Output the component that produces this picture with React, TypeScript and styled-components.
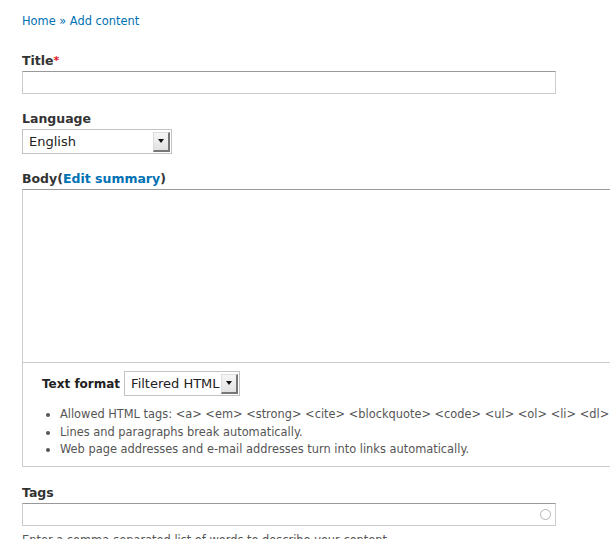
import React from "react";
import styled, { createGlobalStyle } from "styled-components";

const Global = createGlobalStyle`
  html, body { margin: 0; padding: 0; background: #fff; }
  body { font-family: "DejaVu Sans", Verdana, sans-serif; color: #3b3b3b; overflow: hidden; }
`;

const Page = styled.div`
  width: 610px;
  height: 539px;
  overflow: hidden;
  padding: 13px 0 0 22px;
  box-sizing: border-box;
`;

const Breadcrumb = styled.div`
  font-size: 11.4px;
  line-height: 16px;
  color: #0071b3;
  margin-bottom: 23px;
`;

const Link = styled.a`
  color: #0071b3;
  text-decoration: none;
`;

const Field = styled.div<{ $gap?: number }>`
  margin-bottom: ${(p) => p.$gap ?? 17}px;
`;

const Label = styled.label`
  display: block;
  font-size: 12.5px;
  font-weight: bold;
  line-height: 17px;
  color: #333;
  margin-bottom: 2px;
`;

const Required = styled.span`
  color: #e0161c;
  font-size: 11px;
  vertical-align: top;
`;

const TextInput = styled.div<{ $w: number }>`
  position: relative;
  width: ${(p) => p.$w}px;
  height: 23px;
  box-sizing: border-box;
  border: 1px solid #ccc;
  border-top-color: #999;
  background: #fff;
`;

const Throbber = styled.span`
  position: absolute;
  right: 4px;
  top: 5px;
  width: 11px;
  height: 11px;
  border: 1.5px solid #b5b5b5;
  border-radius: 50%;
  box-sizing: border-box;
`;

const Select = styled.div<{ $w: number }>`
  display: flex;
  align-items: center;
  justify-content: space-between;
  width: ${(p) => p.$w}px;
  height: 25px;
  box-sizing: border-box;
  border: 1px solid #c3c3c3;
  padding: 0 1px 0 6px;
  font-size: 13px;
  color: #222;
  background: #fff;
`;

const Arrow = styled.span`
  display: flex;
  align-items: center;
  justify-content: center;
  width: 14px;
  height: 17px;
  background: linear-gradient(#f6f6f6, #e2e2e2);
  border-right: 2px solid #777;
  border-bottom: 2px solid #777;
  border-top: 1px solid #ddd;
  border-left: 1px solid #ddd;
  &::after {
    content: "";
    border-left: 3px solid transparent;
    border-right: 3px solid transparent;
    border-top: 4px solid #111;
  }
`;

const BodyBox = styled.div`
  width: 600px;
  border: 1px solid #ccc;
  border-right: none;
  border-top-color: #999;
`;

const TextArea = styled.div`
  height: 172px;
  border-bottom: 1px solid #ccc;
`;

const FilterWrap = styled.div`
  padding: 8px 0 7px 19px;
`;

const FormatRow = styled.div`
  display: flex;
  align-items: center;
  gap: 4px;
`;

const InlineLabel = styled.span`
  font-size: 12px;
  font-weight: bold;
  color: #222;
`;

const Tips = styled.ul`
  margin: 10px 0 0;
  padding: 0 0 0 18px;
  font-size: 11.4px;
  line-height: 17.5px;
  color: #555;
  white-space: nowrap;
`;

const Description = styled.div`
  font-size: 11.4px;
  color: #555;
  margin-top: 7px;
  white-space: nowrap;
`;

export default function App() {
  return (
    <>
      <Global />
      <Page>
        <Breadcrumb>
          <Link href="#">Home</Link> » <Link href="#">Add content</Link>
        </Breadcrumb>

        <Field $gap={16}>
          <Label>
            Title<Required>*</Required>
          </Label>
          <TextInput $w={534} />
        </Field>

        <Field $gap={16}>
          <Label>Language</Label>
          <Select $w={150}>
            English
            <Arrow />
          </Select>
        </Field>

        <Field $gap={17}>
          <Label>
            Body(<Link href="#">Edit summary</Link>)
          </Label>
          <BodyBox>
            <TextArea />
            <FilterWrap>
              <FormatRow>
                <InlineLabel>Text format</InlineLabel>
                <Select $w={116}>
                  Filtered HTML
                  <Arrow />
                </Select>
              </FormatRow>
              <Tips>
                <li>
                  Allowed HTML tags: &lt;a&gt; &lt;em&gt; &lt;strong&gt; &lt;cite&gt;
                  &lt;blockquote&gt; &lt;code&gt; &lt;ul&gt; &lt;ol&gt; &lt;li&gt; &lt;dl&gt;
                </li>
                <li>Lines and paragraphs break automatically.</li>
                <li>Web page addresses and e-mail addresses turn into links automatically.</li>
              </Tips>
            </FilterWrap>
          </BodyBox>
        </Field>

        <Field>
          <Label>Tags</Label>
          <TextInput $w={534}>
            <Throbber />
          </TextInput>
          <Description>Enter a comma-separated list of words to describe your content.</Description>
        </Field>
      </Page>
    </>
  );
}
